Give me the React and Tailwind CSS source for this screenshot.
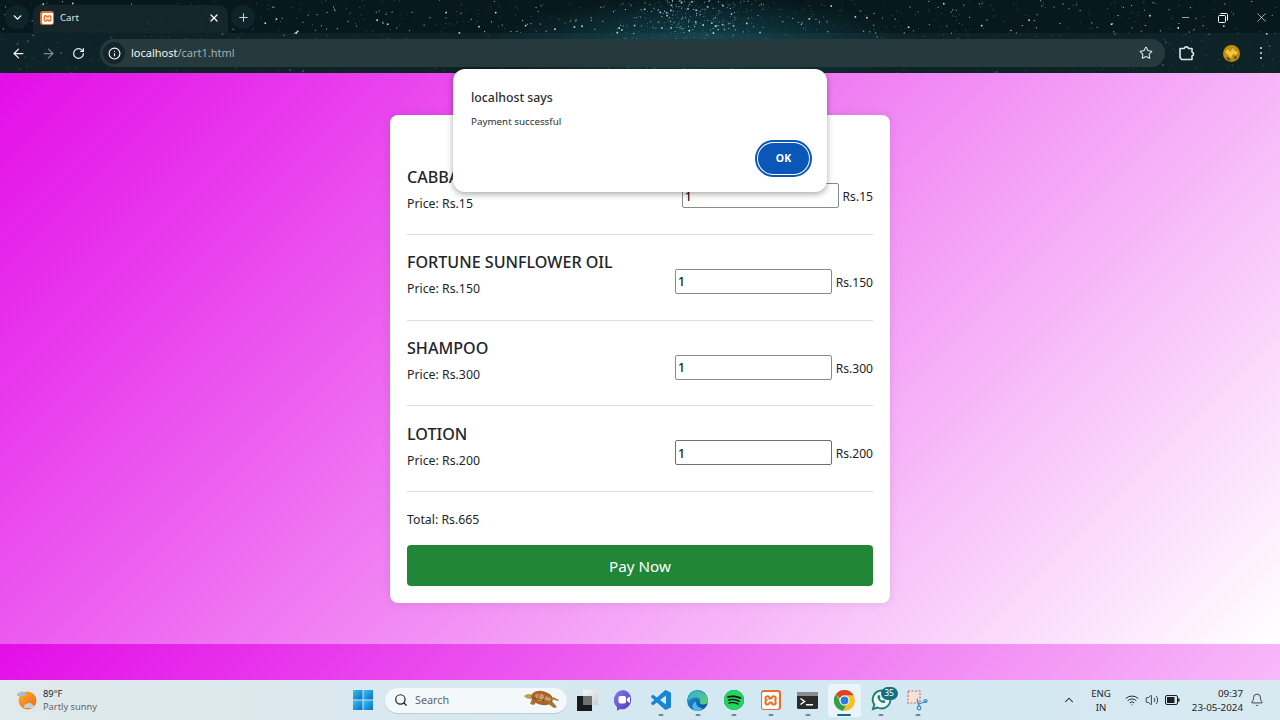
import React from "react";
import { ArrowLeft, ArrowRight, RotateCw, ChevronDown, ChevronUp, Plus, X, Minus, Info, Star, Search, Wifi, Volume2, Bell } from "lucide-react";
import { SiXampp, SiSpotify } from "react-icons/si";

function makeStars() {
  let s = 12345;
  const r = () => ((s = (s * 1664525 + 1013904223) >>> 0) / 4294967296);
  const out = [];
  for (let i = 0; i < 1800; i++) {
    const dense = i % 3 === 0;
    const x = dense ? 590 + (r() + r() + r()) * 70 : r() * 1280;
    const y = r() * 73;
    const b = r();
    out.push({ x, y, size: b > 0.93 ? 1.6 : b > 0.6 ? 1 : 0.7, o: y > 33 ? 0.12 + b * 0.18 : 0.25 + b * 0.7, c: dense ? "#9fdcec" : "#dfeff2" });
  }
  return out;
}
const STARS = makeStars();

function Starfield() {
  return (
    <svg className="absolute inset-0" width="1280" height="73" aria-hidden="true">
      <defs>
        <radialGradient id="glow" cx="0.5" cy="0.7" r="0.5">
          <stop offset="0" stopColor="#1d6a7c" stopOpacity="0.55" />
          <stop offset="1" stopColor="#1d6a7c" stopOpacity="0" />
        </radialGradient>
      </defs>
      <rect x="490" y="-20" width="420" height="93" fill="url(#glow)" />
      {STARS.map((d, i) => (
        <rect key={i} x={d.x} y={d.y} width={d.size} height={d.size} fill={d.c} opacity={d.o} />
      ))}
    </svg>
  );
}

function Xampp({ size, box }) {
  return (
    <span className={`flex items-center justify-center rounded-[3px] bg-[#e8702c] text-white ${box}`}>
      <SiXampp size={size} />
    </span>
  );
}

function Puzzle() {
  return (
    <svg width="18" height="18" viewBox="0 0 18 18" fill="none" stroke="#dfe6e7" strokeWidth="1.6" strokeLinejoin="round">
      <path d="M2 4.5h4.2a2.3 2.3 0 0 1 4.4 0h3.4v3.4a2.2 2.2 0 0 1 0 4.2v3.4H3.6L2 13.5z" />
    </svg>
  );
}

function Restore() {
  return (
    <svg width="10" height="10" viewBox="0 0 10 10" fill="none" stroke="#fff" strokeWidth="1">
      <rect x="0.5" y="2.5" width="7" height="7" rx="1" />
      <path d="M2.5 .5h6a1 1 0 0 1 1 1v6" />
    </svg>
  );
}

function Avatar() {
  return (
    <svg width="17" height="17" viewBox="0 0 17 17">
      <circle cx="8.5" cy="8.5" r="8.5" fill="#c08d10" />
      <path d="M2 7l3-3 2 3 3-4 2 3 3 1-2 3-3-1-2 4-3-3z" fill="#f0c63c" />
      <path d="M3 12l3 1 2 3-3-1zM11 11l3 1-2 3z" fill="#5a4208" />
    </svg>
  );
}

function WinLogo() {
  return (
    <svg width="20" height="20" viewBox="0 0 21 21">
      <defs>
        <linearGradient id="wl" x1="0" y1="0" x2="1" y2="1">
          <stop offset="0" stopColor="#35c4f0" />
          <stop offset="1" stopColor="#0b6cc9" />
        </linearGradient>
      </defs>
      <rect x="0" y="0" width="10" height="10" fill="url(#wl)" />
      <rect x="11" y="0" width="10" height="10" fill="url(#wl)" />
      <rect x="0" y="11" width="10" height="10" fill="url(#wl)" />
      <rect x="11" y="11" width="10" height="10" fill="url(#wl)" />
    </svg>
  );
}

function Turtle() {
  return (
    <svg width="36" height="22" viewBox="0 0 36 22">
      <path d="M0 7c2-2 6-3 8-1l2 2-3 2c-3 0-6-1-7-3z" fill="#b9a34c" />
      <path d="M8 10l-2 5 4 1 3-4zM23 14l7 5 3-1-6-7zM29 8l6 3-1 1-6-2z" fill="#a5763a" />
      <ellipse cx="18" cy="9" rx="11" ry="7" transform="rotate(12 18 9)" fill="#a9622a" />
      <path d="M11 6l5-2 5 3-2 5-6 0zM21 7l6 2-1 5-6-2z" fill="#d19a5b" />
      <path d="M16 4l-3 8M21 7l-2 5M9 9l18 4" stroke="#6c3d16" strokeWidth="0.7" fill="none" />
    </svg>
  );
}

function WindowSquares() {
  return (
    <svg width="21" height="21" viewBox="0 0 21 21">
      <defs>
        <linearGradient id="sq" x1="0" y1="0" x2="1" y2="1">
          <stop offset="0" stopColor="#f7f8f8" />
          <stop offset="1" stopColor="#c9cfd2" />
        </linearGradient>
      </defs>
      <rect x="0" y="6" width="15" height="15" fill="#1a1a1a" />
      <rect x="6" y="0" width="15" height="15" fill="url(#sq)" />
      <rect x="6" y="6" width="9" height="9" fill="#6d7072" />
    </svg>
  );
}

function MeetChat() {
  return (
    <svg width="20" height="21" viewBox="0 0 20 21">
      <defs>
        <linearGradient id="mc" x1="0" y1="0" x2="1" y2="1">
          <stop offset="0" stopColor="#8d7bea" />
          <stop offset="1" stopColor="#4a3bb8" />
        </linearGradient>
      </defs>
      <path d="M10 0a10 10 0 0 1 0 19.2H5.5L3 21v-3.8A10 10 0 0 1 10 0z" fill="url(#mc)" />
      <rect x="4.5" y="6" width="7.5" height="7.5" rx="1.8" fill="#fff" />
      <path d="M13 8.6l3-2v6.4l-3-2z" fill="#fff" />
    </svg>
  );
}

function VSCode() {
  return (
    <svg width="20" height="20" viewBox="0 0 24 24">
      <path fill="#1a85d4" d="M23.15 2.587L18.21.21a1.494 1.494 0 0 0-1.705.29l-9.46 8.63-4.12-3.128a.999.999 0 0 0-1.276.057L.327 7.261A1 1 0 0 0 .326 8.74L3.899 12 .326 15.26a1 1 0 0 0 .001 1.479L1.65 17.94a.999.999 0 0 0 1.276.057l4.12-3.128 9.46 8.63a1.492 1.492 0 0 0 1.704.29l4.942-2.377A1.5 1.5 0 0 0 24 20.06V3.939a1.5 1.5 0 0 0-.85-1.352zm-5.146 14.861L10.826 12l7.178-5.448v10.896z" />
    </svg>
  );
}

function Edge() {
  return (
    <svg width="21" height="21" viewBox="0 0 21 21">
      <defs>
        <linearGradient id="eb" x1="0" y1="0" x2="1" y2="1">
          <stop offset="0" stopColor="#1fa4d8" />
          <stop offset="1" stopColor="#0a3f9c" />
        </linearGradient>
        <linearGradient id="eg" x1="0" y1="0" x2="1" y2="1">
          <stop offset="0" stopColor="#2fb0d8" />
          <stop offset="1" stopColor="#5fd06a" />
        </linearGradient>
      </defs>
      <circle cx="10.5" cy="10.5" r="10.5" fill="url(#eb)" />
      <path d="M3 4A10.5 10.5 0 0 1 21 10.5c0 3-3 4.5-5.5 4-2-.4-3-1.500-2.500-3 .3-2-1-4-4-4C6 7.500 4 8.500 1 11 1 8 2 5.500 3 4z" fill="url(#eg)" />
      <path d="M9 12c0 4 3 6 7 6-2 2-4 3-6 3-3 0-5-3-4.500-6 .5-2 2-3.500 3.500-3z" fill="#4fb8e8" />
    </svg>
  );
}

function Terminal() {
  return (
    <svg width="21" height="17" viewBox="0 0 21 17">
      <rect width="21" height="17" rx="1.500" fill="#2b2b2b" />
      <rect width="21" height="4" fill="#8a8d8f" />
      <path d="M3.500 6.500l4 3-4 3" stroke="#fff" strokeWidth="1.500" fill="none" />
      <rect x="9" y="12" width="7" height="1.500" fill="#fff" />
    </svg>
  );
}

function Chrome() {
  return (
    <svg width="21" height="21" viewBox="0 0 21 21">
      <circle cx="10.500" cy="10.500" r="10.500" fill="#f3c222" />
      <path d="M10.500 0a10.500 10.500 0 0 1 9.100 5.250H10.500a5.250 5.250 0 0 0-4.700 3L1.900 4.300A10.500 10.500 0 0 1 10.500 0z" fill="#dd4132" />
      <path d="M1.900 4.300l4.800 8.900a5.250 5.250 0 0 0 5.100 2.500l-3 5.100A10.500 10.500 0 0 1 1.900 4.300z" fill="#2f9e4f" />
      <circle cx="10.500" cy="10.500" r="5" fill="#fff" />
      <circle cx="10.500" cy="10.500" r="3.900" fill="#2d79e6" />
    </svg>
  );
}

function WhatsApp() {
  return (
    <svg width="21" height="22" viewBox="0 0 21 22" fill="none">
      <path d="M10.500 1.500a9 9 0 0 1 0 18 9 9 0 0 1-4-1L2 20l1.300-4.400a9 9 0 0 1 7.200-14.100z" stroke="#17806d" strokeWidth="1.900" fill="#eef6f6" />
      <path d="M7 6.500c-1 1.500-.5 3.500 1.500 5.500s4 2.500 5.500 1.500l.4-1.500-2.200-1.100-1 .9c-1-.4-2-1.400-2.500-2.500l.9-1L8.500 6z" fill="#17806d" />
    </svg>
  );
}

function Snip() {
  return (
    <svg width="21" height="21" viewBox="0 0 21 21" fill="none">
      <rect x="1" y="1" width="12" height="12" fill="#f1e3dc" />
      <rect x="1" y="1" width="12" height="12" stroke="#cf4a35" strokeWidth="1.200" strokeDasharray="2 1.500" opacity="0.8" />
      <path d="M10 9l2 7M20 11l-8 3" stroke="#3c87c7" strokeWidth="1.300" />
      <circle cx="12" cy="18" r="1.800" stroke="#3c87c7" strokeWidth="1.200" />
      <circle cx="18.500" cy="11" r="1.500" stroke="#3c87c7" strokeWidth="1.200" />
    </svg>
  );
}

function WeatherIcon() {
  return (
    <svg width="22" height="22" viewBox="0 0 22 22">
      <defs>
        <linearGradient id="sun" x1="0" y1="0" x2="1" y2="1">
          <stop offset="0" stopColor="#f8b033" />
          <stop offset="1" stopColor="#ea6a12" />
        </linearGradient>
      </defs>
      <circle cx="11.500" cy="11.500" r="9" fill="url(#sun)" />
      <path d="M1 6c0-2 2-2.500 3-2.500C5 2 8 2 8.500 4c2 0 2 3 0 3H2.500C1.500 7 1 6.800 1 6z" fill="#a9bccb" />
      <path d="M8 17.500c0-2 2-2.500 3-2.500 1-1.500 4.500-1.500 5 .5 2.500 0 2.500 3.500 0 3.500H9.500C8.500 19 8 18.500 8 17.500z" fill="#c3d0da" />
    </svg>
  );
}

function Battery() {
  return (
    <svg width="15" height="10" viewBox="0 0 15 10">
      <rect x="0.500" y="0.500" width="12" height="9" rx="1.500" fill="none" stroke="#1d1f21" />
      <rect x="2" y="2" width="7.500" height="6" fill="#1d1f21" />
      <rect x="13" y="3.500" width="1.500" height="3" fill="#1d1f21" />
    </svg>
  );
}

function Item({ name, price, last }) {
  return (
    <div className="flex h-[85.67px] items-start justify-between border-b border-[#dcdcdc]">
      <div className="pt-[15.3px]">
        <div className="text-[16.1px] leading-[24px] font-medium text-[#212529]">{name}</div>
        <div className="mt-[4px] text-[12.3px] leading-[22px] text-[#212529]">Price: Rs.{price}</div>
      </div>
      <div className="mt-[34px] flex items-center gap-[4px]">
        <input
          defaultValue="1"
          readOnly
          className={`h-[25px] w-[157px] rounded-[2px] border bg-white px-[2px] text-[13.4px] text-black outline-none ${last ? "border-[#6f6f6f]" : "border-[#8a8a8a]"}`}
        />
        <span className="pt-[3px] text-[12.1px] text-[#212529]">Rs.{price}</span>
      </div>
    </div>
  );
}

function Dock({ children, active, dot = true }) {
  return (
    <div className={`relative flex h-[33px] w-[33px] items-center justify-center rounded-[4px] ${active ? "bg-white/55" : ""}`}>
      {children}
      {dot && <span className={`absolute bottom-[1px] left-1/2 h-[2px] -translate-x-1/2 rounded-full ${active ? "w-[14px] bg-[#0f6c84]" : "w-[5px] bg-[#7c8488]"}`} />}
    </div>
  );
}

export default function App() {
  return (
    <div className="relative flex h-[720px] w-[1280px] flex-col overflow-hidden font-['Noto_Sans','Open_Sans',sans-serif]">
      <header className="relative h-[73px] shrink-0 bg-[#07191d]">
        <div className="absolute inset-x-0 bottom-0 h-[40px] bg-[#14292e]/60" />
        <Starfield />
        <div className="relative flex h-[33px] items-end">
          <button className="mb-[4px] ml-[5px] flex h-[24px] w-[24px] items-center justify-center rounded-full bg-[#0e2428] text-white">
            <ChevronDown size={13} strokeWidth={2.500} />
          </button>
          <div className="ml-[4px] flex h-[28px] w-[195px] items-center rounded-t-[9px] bg-[#17292e]/85 pb-[2px] pl-[7px] pr-[8px]">
            <Xampp size={11} box="h-[14px] w-[14px]" />
            <span className="ml-[6px] text-[9.600px] text-[#dfe6e7]">Cart</span>
            <X size={12} strokeWidth={2.500} className="ml-auto text-white" />
          </div>
          <button className="mb-[4px] ml-[3px] flex h-[24px] w-[24px] items-center justify-center rounded-full bg-[#0e2428] text-[#c9d2d4]">
            <Plus size={13} strokeWidth={2} />
          </button>
          <div className="mb-[-1px] ml-auto flex h-[33px] items-center text-white">
            <div className="flex w-[38px] justify-center"><Minus size={11} strokeWidth={1.300} /></div>
            <div className="flex w-[38px] justify-center"><Restore /></div>
            <div className="flex w-[38px] justify-center"><X size={15} strokeWidth={1} /></div>
          </div>
        </div>
        <div className="relative flex h-[40px] items-center pl-[3px]">
          <div className="flex w-[30px] justify-center text-[#eef2f2]"><ArrowLeft size={15} strokeWidth={2} /></div>
          <div className="flex w-[30px] justify-center text-[#7c8a8d]"><ArrowRight size={15} strokeWidth={2} /></div>
          <div className="flex w-[30px] justify-center text-[#eef2f2]"><RotateCw size={13} strokeWidth={2.200} /></div>
          <div className="ml-[7px] flex h-[28px] w-[1065px] items-center rounded-full bg-[#263a3d] pl-[3px] pr-[12px]">
            <span className="flex h-[22px] w-[22px] items-center justify-center rounded-full bg-[#13262a] text-white"><Info size={13} strokeWidth={2} /></span>
            <span className="ml-[6px] text-[11px] text-[#f2f5f5]">localhost<span className="text-[#a2aeb0]">/cart1.html</span></span>
            <Star size={14} strokeWidth={1.800} className="ml-auto text-[#dfe6e7]" />
          </div>
          <div className="ml-[13px] flex w-[18px] justify-center"><Puzzle /></div>
          <div className="ml-[27px] flex"><Avatar /></div>
          <div className="ml-[20px] flex flex-col gap-[3px]">
            <span className="h-[2px] w-[2px] rounded-full bg-[#dfe6e7]" />
            <span className="h-[2px] w-[2px] rounded-full bg-[#dfe6e7]" />
            <span className="h-[2px] w-[2px] rounded-full bg-[#dfe6e7]" />
          </div>
        </div>
      </header>

      <main className="flex h-[607px] flex-col items-center bg-[linear-gradient(135deg,#e30ee8,#ffffff)] bg-[length:100%_571px] bg-repeat pt-[42px]">
        <section className="flex w-[500px] flex-col rounded-[8px] bg-white px-[17px] pb-[17px] pt-[34.3px] shadow-[0_0_10px_rgba(0,0,0,0.1)]">
          <Item name="CABBAGE" price="15" />
          <Item name="FORTUNE SUNFLOWER OIL" price="150" />
          <Item name="SHAMPOO" price="300" />
          <Item name="LOTION" price="200" last />
          <div className="mt-[17px] text-[12.3px] leading-[22px] text-[#212529]">Total: Rs.665</div>
          <button className="mt-[14px] h-[41px] rounded-[4px] bg-[#228639] pt-[2px] text-[15.200px] text-white">Pay Now</button>
        </section>
      </main>

      <div className="absolute left-[453px] top-[69px] flex h-[123px] w-[374px] flex-col rounded-[12px] bg-white pl-[18px] pr-[15px] pt-[20px] shadow-[0_2px_6px_rgba(0,0,0,0.35)]">
        <div className="text-[12.300px] leading-[18px] font-medium text-[#2b2f33]">localhost says</div>
        <div className="mt-[8px] text-[9.800px] leading-[14px] text-[#2b2f33]">Payment successful</div>
        <button className="ml-auto mt-[11px] flex h-[37px] w-[57px] items-center justify-center rounded-full border-[2px] border-[#0b57b8] bg-white">
          <span className="flex h-[31px] w-[51px] items-center justify-center rounded-full bg-[#0b57b8] text-[10.500px] font-bold text-white">OK</span>
        </button>
      </div>

      <footer className="flex h-[40px] shrink-0 items-center bg-[linear-gradient(90deg,#e0e9eb,#d2e8f2_60%,#d8e9f1)] text-[#1d1f21]">
        <div className="flex w-[353px] items-center pl-[16px]">
          <WeatherIcon />
          <div className="ml-[5px] text-[9.300px] leading-[13px]">
            <div>89°F</div>
            <div className="text-[#5e6468]">Partly sunny</div>
          </div>
        </div>
        <div className="flex items-center">
          <WinLogo />
          <div className="ml-[12px] flex h-[25px] w-[182px] items-center rounded-full bg-[#f3f8fa] pl-[9px] pr-[7px] shadow-[0_1px_1px_rgba(0,0,0,0.12)]">
            <Search size={14} strokeWidth={2} className="text-[#1d1f21]" />
            <span className="ml-[7px] text-[10.800px] text-[#5e6468]">Search</span>
            <span className="ml-auto flex"><Turtle /></span>
          </div>
          <div className="ml-[4px] flex items-center gap-[3.700px]">
            <Dock dot={false}><WindowSquares /></Dock>
            <Dock dot={false}><MeetChat /></Dock>
            <Dock><VSCode /></Dock>
            <Dock><Edge /></Dock>
            <Dock><span className="flex text-[#1ed760]"><span className="flex rounded-full bg-[#111]"><SiSpotify size={20} /></span></span></Dock>
            <Dock><Xampp size={17} box="h-[20px] w-[20px]" /></Dock>
            <Dock><Terminal /></Dock>
            <Dock active><Chrome /></Dock>
            <Dock>
              <WhatsApp />
              <span className="absolute right-[0px] top-[3px] flex h-[13px] w-[17px] items-center justify-center rounded-full bg-[#13707f] text-[8.500px] text-white">35</span>
            </Dock>
            <Dock><Snip /></Dock>
          </div>
        </div>
        <div className="ml-auto flex items-center pr-[16px]">
          <ChevronUp size={14} strokeWidth={1.800} />
          <div className="ml-[15px] pt-[1px] text-center text-[9.600px] leading-[14px]"><div>ENG</div><div>IN</div></div>
          <div className="ml-[14px] flex items-center gap-[6px]">
            <Wifi size={14} strokeWidth={1.600} />
            <Volume2 size={14} strokeWidth={1.400} />
            <Battery />
          </div>
          <div className="ml-[12px] pt-[1px] text-right text-[9.800px] leading-[14px]"><div>09:37</div><div>23-05-2024</div></div>
          <Bell size={14} strokeWidth={1.400} className="ml-[7px]" />
        </div>
      </footer>
    </div>
  );
}
